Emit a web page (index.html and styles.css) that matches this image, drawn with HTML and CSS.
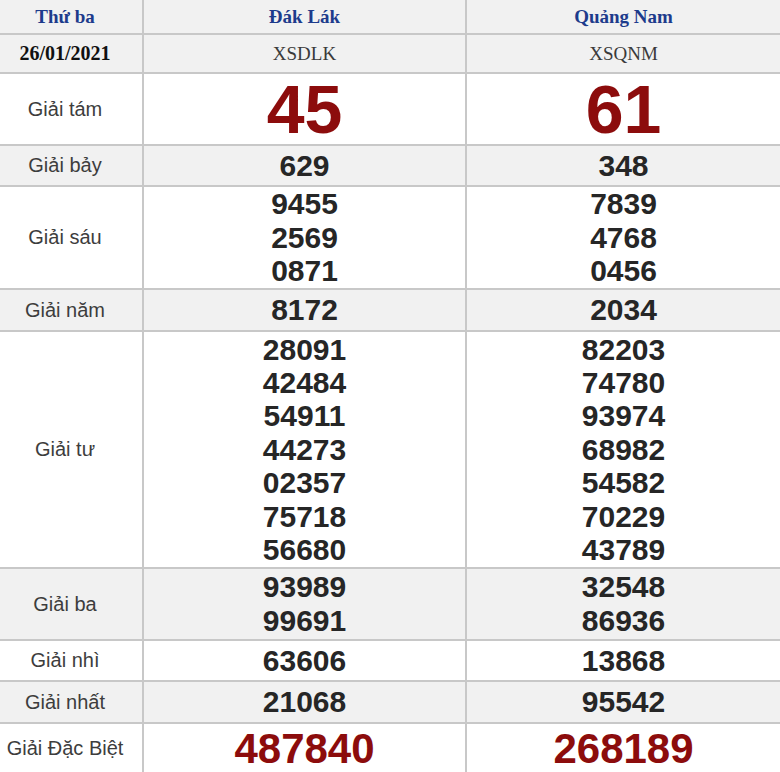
FILE: index.html
```html
<!DOCTYPE html>
<html lang="vi">
<head>
<meta charset="utf-8">
<title>Kết quả xổ số 26/01/2021</title>
<link rel="stylesheet" href="styles.css">
</head>
<body>
<table class="kq">
  <colgroup>
    <col class="c-label">
    <col class="c-prov">
    <col class="c-prov2">
  </colgroup>
  <tr class="r-head alt">
    <th class="first day">Thứ ba</th>
    <th class="prov">Đák Lák</th>
    <th class="prov">Quảng Nam</th>
  </tr>
  <tr class="r-date alt">
    <td class="first date">26/01/2021</td>
    <td class="code">XSDLK</td>
    <td class="code">XSQNM</td>
  </tr>
  <tr class="r-g8">
    <td class="first lbl">Giải tám</td>
    <td class="num big red">45</td>
    <td class="num big red">61</td>
  </tr>
  <tr class="r-g7 alt">
    <td class="first lbl">Giải bảy</td>
    <td class="num">629</td>
    <td class="num">348</td>
  </tr>
  <tr class="r-g6">
    <td class="first lbl">Giải sáu</td>
    <td class="num six"><div>9455</div><div>2569</div><div>0871</div></td>
    <td class="num six"><div>7839</div><div>4768</div><div>0456</div></td>
  </tr>
  <tr class="r-g5 alt">
    <td class="first lbl">Giải năm</td>
    <td class="num">8172</td>
    <td class="num">2034</td>
  </tr>
  <tr class="r-g4">
    <td class="first lbl">Giải tư</td>
    <td class="num tight"><div>28091</div><div>42484</div><div>54911</div><div>44273</div><div>02357</div><div>75718</div><div>56680</div></td>
    <td class="num tight"><div>82203</div><div>74780</div><div>93974</div><div>68982</div><div>54582</div><div>70229</div><div>43789</div></td>
  </tr>
  <tr class="r-g3 alt">
    <td class="first lbl">Giải ba</td>
    <td class="num"><div>93989</div><div>99691</div></td>
    <td class="num"><div>32548</div><div>86936</div></td>
  </tr>
  <tr class="r-g2">
    <td class="first lbl">Giải nhì</td>
    <td class="num">63606</td>
    <td class="num">13868</td>
  </tr>
  <tr class="r-g1 alt">
    <td class="first lbl">Giải nhất</td>
    <td class="num">21068</td>
    <td class="num">95542</td>
  </tr>
  <tr class="r-db">
    <td class="first lbl">Giải Đặc Biệt</td>
    <td class="num db red">487840</td>
    <td class="num db red">268189</td>
  </tr>
</table>
</body>
</html>
```

FILE: styles.css
```css
html, body {
  margin: 0;
  padding: 0;
  background: #ffffff;
}

.kq {
  width: 780px;
  border-collapse: collapse;
  table-layout: fixed;
  font-family: "Liberation Sans", Arial, sans-serif;
  color: #222;
}

.c-label { width: 143px; }
.c-prov { width: 323px; }
.c-prov2 { width: 314px; }

.kq th,
.kq td {
  border: 2px solid #c8c8c8;
  padding: 0;
  text-align: center;
  vertical-align: middle;
}

.kq tr:first-child th { border-top: none; }
.kq tr:last-child td { border-bottom: none; }
.kq th:first-child,
.kq td:first-child { border-left: none; }
.kq th:last-child,
.kq td:last-child { border-right: none; }

.kq .first { padding-right: 12px; }

.alt th,
.alt td { background: #f1f1f1; }

.r-head { height: 34px; }
.r-date { height: 39px; }
.r-g8 { height: 72px; }
.r-g7 { height: 41px; }
.r-g6 { height: 103px; }
.r-g5 { height: 42px; }
.r-g4 { height: 237px; }
.r-g3 { height: 72px; }
.r-g2 { height: 41px; }
.r-g1 { height: 42px; }
.r-db { height: 49px; }

.day,
.prov {
  font-family: "Liberation Serif", "Times New Roman", serif;
  font-weight: bold;
  font-size: 19px;
  color: #1d3b8c;
}

.date {
  font-family: "Liberation Serif", "Times New Roman", serif;
  font-weight: bold;
  font-size: 20px;
  color: #111;
}

.code {
  font-family: "Liberation Serif", "Times New Roman", serif;
  font-size: 19px;
  color: #3a3a3a;
}

.lbl {
  font-size: 20px;
  color: #3d3d3d;
}

.num {
  font-weight: bold;
  font-size: 30px;
  line-height: 34px;
  color: #262626;
}

.six { line-height: 33.6px; }
.tight { line-height: 33.4px; }

.big {
  font-size: 68px;
  line-height: 70px;
}

.kq .db {
  font-size: 42px;
  line-height: 44px;
  padding-top: 2px;
}

.red { color: #8c0c0c; }
```
